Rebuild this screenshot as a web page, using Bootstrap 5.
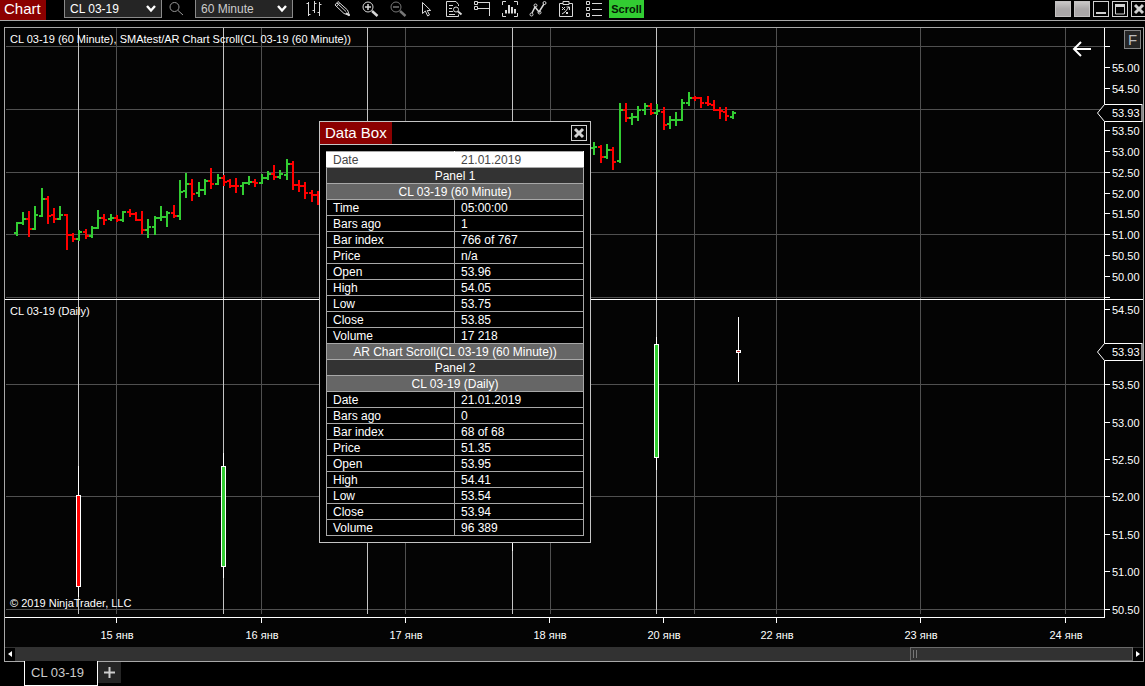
<!DOCTYPE html>
<html lang="en">
<head>
<meta charset="utf-8">
<meta name="viewport" content="width=device-width, initial-scale=1">
<title>Chart - CL 03-19</title>
<link href="https://cdn.jsdelivr.net/npm/bootstrap@5.3.0/dist/css/bootstrap.min.css" rel="stylesheet">
<style>
:root { --line:#a8a8a8; --face:#252525; --red:#8b0000; }
body { background:#000; color:#fff; font-family:"Liberation Sans",Arial,sans-serif; font-size:12px; line-height:16px; overflow:hidden; }
button { font-family:inherit; }
.toolbar { height:21px; border-bottom:1px solid var(--line); margin-bottom:6px; }
.caption { background:var(--red); font-size:15px; padding:0 5px; white-space:nowrap; }
.toolbar .caption { width:46px; height:20px; line-height:18px; padding:0 4px; margin-right:18px; }
.picker { width:98px; height:18px; padding:0 20px 0 5px; font-size:12px; line-height:16px; color:#fff; background-color:var(--face); border:1px solid #8a8a8a; border-top:0; border-radius:0;
  background-image:url("data:image/svg+xml,%3csvg xmlns='http://www.w3.org/2000/svg' viewBox='0 0 12 9'%3e%3cpath fill='none' stroke='%23fff' stroke-width='2.4' d='M2 2l4 4.5L10 2'/%3e%3c/svg%3e");
  background-size:12px 9px; background-position:right 4px center; }
.picker.muted { color:#ccc; margin:0 7px 0 5px; }
.tool { width:28px; height:18px; padding:0; border:0; border-radius:0; display:flex; align-items:center; justify-content:center; color:#d8d8d8; }
.tool svg { width:18px; height:18px; fill:none; stroke:currentColor; }
.tool.off { color:#777; }
.tool.find { color:#999; }
.scroll-btn { width:35px; height:18px; margin-left:1px; padding:0; border:0; border-radius:0; background:#32cd32; color:#041a04; font-size:11px; font-weight:bold; line-height:18px; }
.scroll-btn:hover { background:#32cd32; color:#041a04; }
.win-group { gap:3px; margin:1px -2px 0 auto; }
.winbtn { width:16px; height:16px; flex:none; padding:0; border:1px solid #d0d0d0; border-radius:0; background:#000; display:flex; }
.winbtn svg { width:14px; height:14px; fill:none; stroke:#d0d0d0; }
.winbtn.plain { background:linear-gradient(#c9c7c7,#aaa7a8 50%); border-color:#c4c2c2; }
.frame { margin:0 1px 0 4px; border:1px solid var(--line); background:#040404; min-height:0; }
.pane-one { height:271px; }
.pane-two { min-height:200px; }
.divide { border-bottom:1px solid #fff; }
.price-axis { width:39px; flex:none; overflow:visible; }
.plot { width:0; height:100%; }
.frame svg text { font-size:11px; fill:#fff; }
.time-axis { height:30px; width:100%; }
.sbar { height:14px; background:#323232; }
.sbar button { width:10px; height:13px; padding:0; border:0; background:#000; display:flex; align-items:center; justify-content:center; }
.thumb { width:223px; height:14px; background:#323232; border:1px solid #6a6a6a; padding:2px; gap:2px; }
.thumb i { width:1px; height:8px; background:#777; }
.corner { top:2px; right:2px; width:17px; height:19px; padding:0; background:var(--face); border:1px solid #858585; border-radius:0; color:#bbb; font-size:15px; line-height:17px; }
.back { top:12px; right:52px; width:19px; height:18px; padding:0; border:0; background:none; display:flex; }
.databox { left:319px; top:121px; width:272px; background:#000; border:1px solid #c4c4c4; }
.databox header { height:23px; border-bottom:1px solid #c4c4c4; padding-right:3px; }
.databox .caption { height:22px; line-height:22px; width:72px; }
.grid-data { margin:6px; width:258px; table-layout:fixed; border-collapse:collapse; }
.grid-data .name-col { width:128px; }
.grid-data td, .grid-data th { height:16px; padding:1px 0 0 6px; line-height:14px; border:1px solid var(--line); font-weight:normal; }
.grid-data .pick > * { background:#fff; color:#444; border-left-color:#fff; border-right-color:#fff; }
.grid-data .pane-row th { background:#333; text-align:center; padding-left:0; }
.grid-data .series-row th { background:#666; text-align:center; padding-left:0; }
.tabs { height:24px; padding-left:24px; }
.tab-on { width:74px; height:25px; margin-top:-1px; padding:0 0 0 6px; color:#ccc; background:#000; border:1px solid #fff; border-top:0; border-radius:0; font-size:13px; line-height:22px; text-align:left; position:relative; }
.tab-add { width:23px; height:21px; padding:0; border:0; border-radius:0; background:var(--face); color:#ccc; display:flex; align-items:center; justify-content:center; }
</style>
</head>
<body class="d-flex flex-column vh-100 position-relative">

<header class="toolbar d-flex align-items-start flex-shrink-0">
  <div class="caption">Chart</div>
  <select class="form-select picker" aria-label="Instrument"><option>CL 03-19</option></select>
  <button class="btn tool find" aria-label="Search"><svg viewBox="0 0 18 18"><circle cx="7.5" cy="7" r="4.5"/><path d="M11 10.5l5 4.500"/></svg></button>
  <select class="form-select picker muted" aria-label="Interval"><option>60 Minute</option></select>
  <button class="btn tool" aria-label="Bar style"><svg viewBox="0 0 18 18"><path d="M3.500 2v14M1.500 3.500h2M3.500 14.500h2M9.500 1v12M7.500 10.500h2M9.500 3.500h2M14.500 2v14M12.500 12.500h2M14.500 4.500h2"/></svg></button>
  <button class="btn tool" aria-label="Drawing tools"><svg viewBox="0 0 18 18"><path d="M2 5l3-3.500L14.500 10l2 5.500-5.500-2zM4 3l9 8.500M3.500 6.500L6.500 3"/><path d="M13 13l3.500 2.500" stroke-width="2"/></svg></button>
  <button class="btn tool" aria-label="Zoom in"><svg viewBox="0 0 18 18"><circle cx="7" cy="7" r="5"/><path d="M4 7h6M7 4v6" stroke-width="1.500"/><path d="M11 11l5.500 5" stroke-width="2.500"/></svg></button>
  <button class="btn tool off" aria-label="Zoom out"><svg viewBox="0 0 18 18"><circle cx="7" cy="7" r="5"/><path d="M4 7h6" stroke-width="1.500"/><path d="M11 11l5.500 5" stroke-width="2.500"/></svg></button>
  <button class="btn tool" aria-label="Cursor"><svg viewBox="0 0 18 18"><path d="M5.500 2.500v11l2.800-2.500 2.400 5 1.800-1-2.300-4.500h3.500z"/></svg></button>
  <button class="btn tool" aria-label="Data box"><svg viewBox="0 0 18 18"><path d="M13.500 6V4.500L11 1.500H1.500v15h12v-2M4 5.500h4M4 8.500h3M4 11.500h4M4 14.500h6"/><circle cx="11" cy="9.500" r="2.500"/><path d="M13 11.500l3.500 3" stroke-width="2"/></svg></button>
  <button class="btn tool" aria-label="Chart trader"><svg viewBox="0 0 18 18"><path d="M1.500 1.500h3v3h-3zM1.500 6.500h3v3h-3zM4.500 2.500h12M4.500 8.500h12M16.500 2v14"/></svg></button>
  <button class="btn tool" aria-label="Indicators"><svg viewBox="0 0 18 18"><path d="M5 1.500H1.500V5M13 1.500h3.500V5M5 16.500H1.500V13M13 16.500h3.500V13"/><path d="M5 13.500V10M8 13.500V5M11 13.500V7M14 13.500V9" stroke-width="2"/></svg></button>
  <button class="btn tool" aria-label="Strategies"><svg viewBox="0 0 18 18"><path d="M3 13L6 7l4 5 5-8" stroke-width="1.500"/><circle cx="2.500" cy="14.500" r="1.500"/><circle cx="6.500" cy="5.500" r="1.500"/><circle cx="10.500" cy="12.500" r="1.500"/><circle cx="15.500" cy="3" r="1.500"/></svg></button>
  <button class="btn tool" aria-label="Templates"><svg viewBox="0 0 18 18"><path d="M6 3.500H2.500v13h13v-13H12M6 1.500h6v3H6zM5 7l3 3M8 7l-3 3M9 12l2 2M11 12l-2 2M5 14l3-2 4-5M9.500 7h3v3"/></svg></button>
  <button class="btn tool" aria-label="Properties"><svg viewBox="0 0 18 18"><path d="M1.500 1.500h3v3h-3zM1.500 7.500h3v3h-3zM1.500 13.500h3v3h-3zM7 3.500h10M7 9.500h10M7 15.500h10"/></svg></button>
  <button class="btn scroll-btn">Scroll</button>
  <div class="win-group d-flex">
    <button class="btn winbtn plain" aria-label="Link instrument"></button>
    <button class="btn winbtn plain" aria-label="Link interval"></button>
    <button class="btn winbtn" aria-label="Minimize"><svg viewBox="0 0 14 14"><path d="M2 11h10" stroke-width="2"/></svg></button>
    <button class="btn winbtn" aria-label="Maximize"><svg viewBox="0 0 14 14"><path d="M2.500 3v9h9V3"/><path d="M2 3.500h10" stroke-width="3"/></svg></button>
    <button class="btn winbtn" aria-label="Close"><svg viewBox="0 0 14 14"><path d="M3 3l8 8M11 3l-8 8" stroke-width="3"/></svg></button>
  </div>
</header>

<main class="frame d-flex flex-column flex-grow-1 position-relative">
  <section class="pane-one d-flex flex-shrink-0">
    <svg class="plot flex-grow-1" id="plot1" shape-rendering="crispEdges"></svg>
    <svg class="price-axis h-100" id="axis1"></svg>
  </section>
  <div class="divide"></div>
  <section class="pane-two d-flex flex-grow-1">
    <svg class="plot flex-grow-1" id="plot2" shape-rendering="crispEdges"></svg>
    <svg class="price-axis h-100" id="axis2"></svg>
  </section>
  <svg class="time-axis flex-shrink-0" id="time"></svg>
  <div class="sbar d-flex align-items-center flex-shrink-0">
    <button aria-label="Scroll left"><svg width="4" height="6"><path d="M4 0v6L0 3z" fill="#fff"/></svg></button>
    <div class="thumb d-flex ms-auto align-items-center"><i></i><i></i></div>
    <button aria-label="Scroll right"><svg width="4" height="6"><path d="M0 0v6l4-3z" fill="#fff"/></svg></button>
  </div>
  <button class="btn corner position-absolute" aria-label="Fixed scale">F</button>
  <button class="back position-absolute" aria-label="Return to latest bar"><svg width="19" height="18"><path d="M19 9H2M9 2L2 9l7 7" fill="none" stroke="#fff" stroke-width="2"/></svg></button>
</main>

<nav class="tabs d-flex align-items-start flex-shrink-0">
  <button class="btn tab-on">CL 03-19</button>
  <button class="btn tab-add" aria-label="Add tab"><svg width="11" height="11"><path d="M0 5.500h11M5.500 0v11" stroke="#ccc" stroke-width="2"/></svg></button>
</nav>

<section class="databox position-absolute">
  <header class="d-flex align-items-center justify-content-between">
    <div class="caption">Data Box</div>
    <button class="btn winbtn" aria-label="Close data box"><svg viewBox="0 0 14 14"><path d="M3 3l8 8M11 3l-8 8" stroke-width="3"/></svg></button>
  </header>
  <table class="grid-data">
    <colgroup><col class="name-col"><col></colgroup>
    <tbody>
      <tr class="pick"><td>Date</td><td>21.01.2019</td></tr>
      <tr class="pane-row"><th colspan="2">Panel 1</th></tr>
      <tr class="series-row"><th colspan="2">CL 03-19 (60 Minute)</th></tr>
      <tr><td>Time</td><td>05:00:00</td></tr>
      <tr><td>Bars ago</td><td>1</td></tr>
      <tr><td>Bar index</td><td>766 of 767</td></tr>
      <tr><td>Price</td><td>n/a</td></tr>
      <tr><td>Open</td><td>53.96</td></tr>
      <tr><td>High</td><td>54.05</td></tr>
      <tr><td>Low</td><td>53.75</td></tr>
      <tr><td>Close</td><td>53.85</td></tr>
      <tr><td>Volume</td><td>17 218</td></tr>
      <tr class="series-row"><th colspan="2">AR Chart Scroll(CL 03-19 (60 Minute))</th></tr>
      <tr class="pane-row"><th colspan="2">Panel 2</th></tr>
      <tr class="series-row"><th colspan="2">CL 03-19 (Daily)</th></tr>
      <tr><td>Date</td><td>21.01.2019</td></tr>
      <tr><td>Bars ago</td><td>0</td></tr>
      <tr><td>Bar index</td><td>68 of 68</td></tr>
      <tr><td>Price</td><td>51.35</td></tr>
      <tr><td>Open</td><td>53.95</td></tr>
      <tr><td>High</td><td>54.41</td></tr>
      <tr><td>Low</td><td>53.54</td></tr>
      <tr><td>Close</td><td>53.94</td></tr>
      <tr><td>Volume</td><td>96 389</td></tr>
    </tbody>
  </table>
</section>

<script src="https://cdn.jsdelivr.net/npm/bootstrap@5.3.0/dist/js/bootstrap.bundle.min.js"></script>
<script>
const LEFT = 5, TOP1 = 28, TOP2 = 300;
const GREEN = '#32cd32', RED = '#ff0000';

// Hourly bars: direction, x, high, low, open, close
const hourly = `g 17 222 236 233 223|g 23 212 225 223 219|r 29 211 237 219 229|g 35 206 230 229 215|g 42 188 217 216 199|r 48 196 224 199 216
r 54 208 223 215 219|g 60 206 220 219 215|r 67 214 250 215 235|r 73 233 242 235 239|g 79 230 241 239 232|r 86 229 239 232 236|g 92 226 238 236 228
g 98 210 229 228 218|r 104 214 225 218 220|g 111 214 221 219 218|r 117 215 222 218 220|g 123 211 222 220 212|r 130 209 217 212 214|r 136 212 221 214 220
r 142 211 234 220 230|g 148 219 238 230 227|g 155 216 235 227 218|g 161 206 221 218 217|g 167 211 227 217 213|r 174 205 218 213 216|g 180 180 220 216 192
g 186 173 198 191 184|r 192 179 201 184 194|g 199 182 197 193 190|g 205 179 195 190 181|r 211 168 189 181 184|g 218 174 185 184 178|r 224 175 186 178 182
r 230 179 188 181 186|r 236 178 193 186 186|g 243 182 195 186 183|g 249 176 185 183 182|r 255 179 187 182 183|g 262 174 184 183 178|g 268 171 180 178 174
r 274 165 180 174 177|g 280 170 179 177 174|g 287 159 180 175 164|r 293 161 190 164 185|r 299 180 192 185 186|r 305 182 199 186 193|r 312 190 202 193 195
r 318 191 205 195 200|g 594 142 155 148 147|r 601 145 163 147 157|g 607 144 159 157 150|r 613 147 170 150 162|g 620 103 163 161 110|r 626 103 122 110 118
g 632 113 125 118 117|g 638 106 121 117 110|g 645 103 115 110 106|r 651 103 115 106 113|g 657 104 115 113 111|r 664 107 130 112 125|g 670 116 129 124 120
g 676 112 126 120 120|g 682 99 121 120 103|g 689 92 106 103 98|r 695 96 101 98 98|r 701 97 108 98 103|r 708 96 106 103 104|r 714 100 111 105 110
r 720 107 119 110 111|r 726 107 121 112 116|g 733 111 119 117 113`.split(/[|\n]/).map(s => s.split(' '));

// Daily candles: x, high, low, body top, body bottom, fill
const daily = [[78,466,597,495,587,RED],[223,453,578,466,567,GREEN],[512,530,551,0,0,''],[656,337,470,344,458,GREEN],[738,317,382,350,353,'#c03030']];
const days = [116,261,405,550,694,776,920,1065];
const sessions = [78,223,367,512,656];
const rect = (x, y, w, h, f) => `<rect x="${x}" y="${y}" width="${w}" height="${h}" fill="${f}"/>`;
const label = (x, y, s, more = '') => `<text x="${x}" y="${y}" ${more}>${s}</text>`;

function plot(top, bottom, rows) {
  let s = rows.map(y => rect(1, y - top, '100%', 1, '#505050')).join('');
  s += days.map(x => rect(x - LEFT, 0, 1, bottom - top, '#505050')).join('');
  return s + sessions.map(x => rect(x - LEFT, 0, 1, bottom - top, '#c4c4c4')).join('');
}
let one = plot(TOP1, 299, [46,109,172,234,297]);
for (const [d, ...v] of hourly) {
  const [x, hi, lo, op, cl] = v.map(Number), c = d === 'g' ? GREEN : RED, px = x - LEFT;
  one += rect(px - 1, hi - TOP1, 2, lo - hi, c) + rect(px - 3, op - TOP1 - 1, 3, 2, c) + rect(px, cl - TOP1 - 1, 3, 2, c);
}
plot1.innerHTML = one + label(5, 15, 'CL 03-19 (60 Minute), SMAtest/AR Chart Scroll(CL 03-19 (60 Minute))');

let two = plot(TOP2, 614, [384,496,609]);
for (const [x, hi, lo, t, b, c] of daily) {
  two += rect(x - LEFT, hi - TOP2, 1, lo - hi, '#fff');
  if (b) two += rect(x - LEFT - 2, t - TOP2, 5, b - t, '#fff') + rect(x - LEFT - 1, t - TOP2 + 1, 3, b - t - 2, c);
}
plot2.innerHTML = two + label(5, 15, 'CL 03-19 (Daily)') + label(5, 307, '© 2019 NinjaTrader, LLC');

function axis(top, ticks, mark) {
  let s = rect(0, 0, 1, '100%', '#fff');
  for (const [y, t] of ticks) s += rect(1, y - top, 5, 1, '#fff') + (t ? label(8, y - top + 5, t) : '');
  const m = mark - top;
  s += `<path d="M38.500 ${m - 8.5}H.5L-6.500 ${m}L.5 ${m + 8.5}H38.500" fill="#000" stroke="#fff"/>` + rect(37, m - 8, 2, 16, '#888');
  return s + label(8, m + 4, '53.93');
}
axis1.innerHTML = axis(TOP1, [[46],[67,'55.00'],[88,'54.50'],[130,'53.50'],[151,'53.00'],[172,'52.50'],[193,'52.00'],[213,'51.50'],[234,'51.00'],[255,'50.50'],[276,'50.00'],[297]], 113);
axis2.innerHTML = axis(TOP2, [[309,'54.50'],[384,'53.50'],[422,'53.00'],[459,'52.50'],[496,'52.00'],[534,'51.50'],[571,'51.00'],[609,'50.50']], 352);

time.innerHTML = rect(0, 0, 1100, 1, '#fff') + [[116,'15'],[261,'16'],[405,'17'],[549,'18'],[663,'20'],[776,'22'],[920,'23'],[1065,'24']]
  .map(([x, d]) => rect(x - LEFT, 1, 1, 5, '#fff') + label(x - LEFT + 1, 22, d + ' янв', 'text-anchor="middle"')).join('');
</script>
</body>
</html>
